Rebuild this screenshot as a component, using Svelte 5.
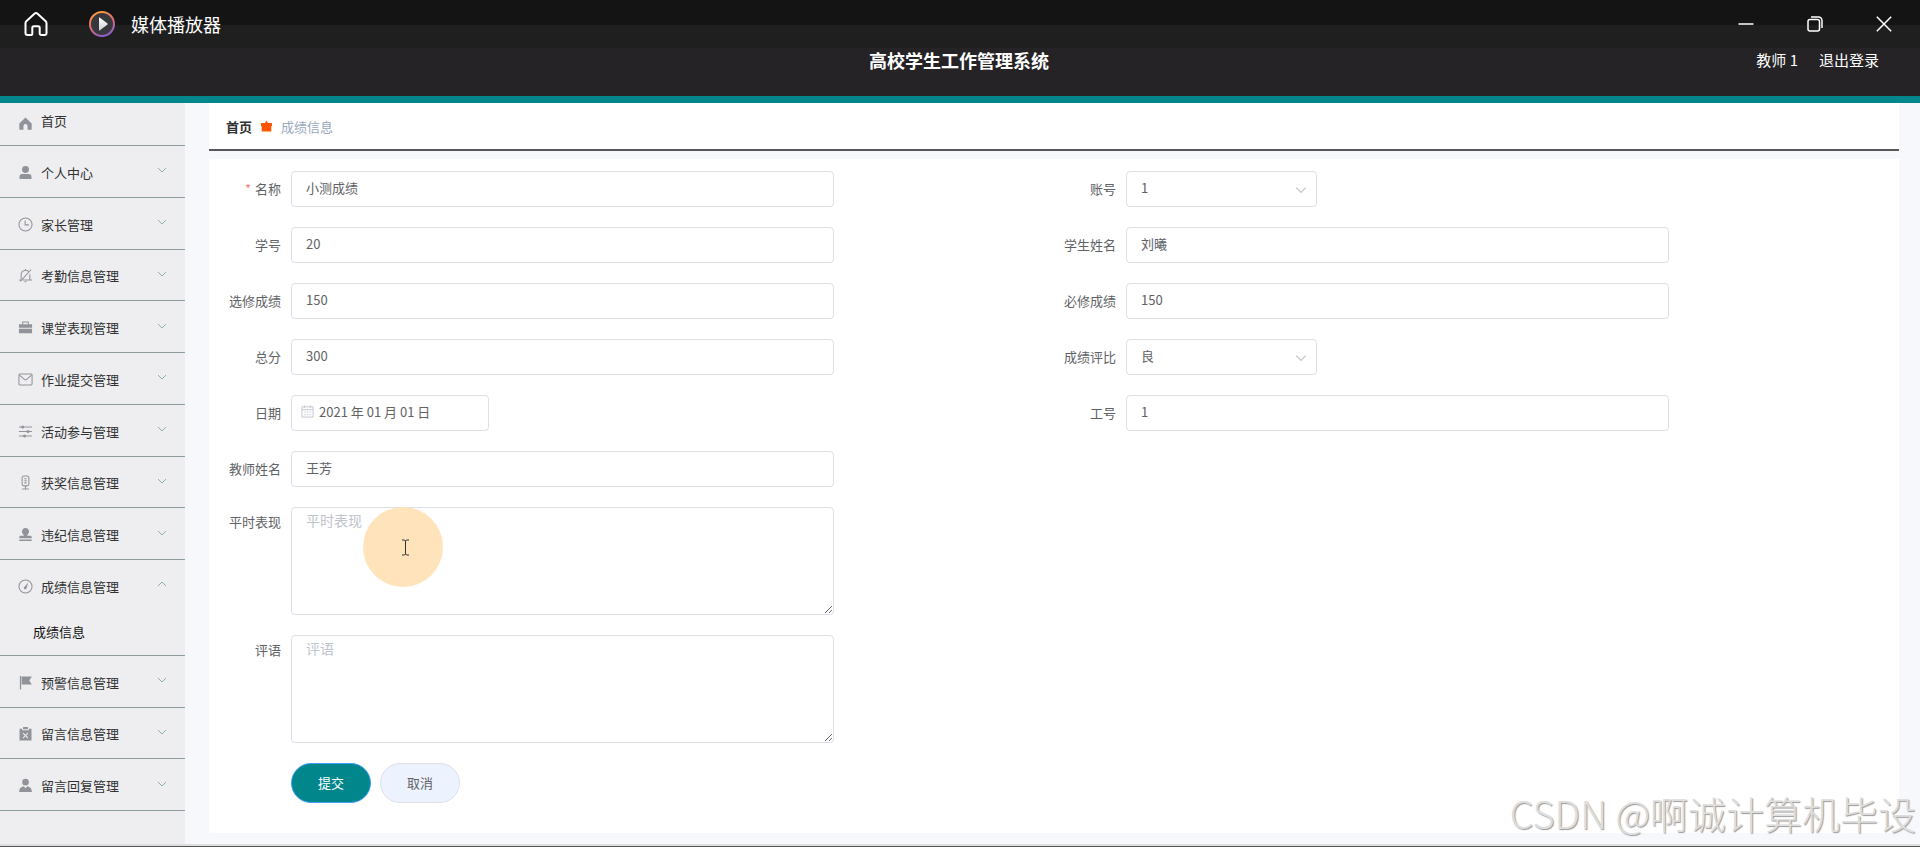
<script>
  const menu = [
    { text: '个人中心', icon: 'user' },
    { text: '家长管理', icon: 'clock' },
    { text: '考勤信息管理', icon: 'mute' },
    { text: '课堂表现管理', icon: 'case' },
    { text: '作业提交管理', icon: 'mail' },
    { text: '活动参与管理', icon: 'sliders' },
    { text: '获奖信息管理', icon: 'mic' },
    { text: '违纪信息管理', icon: 'stamp' },
    { text: '成绩信息管理', icon: 'compass', children: ['成绩信息'] },
    { text: '预警信息管理', icon: 'flag' },
    { text: '留言信息管理', icon: 'clipboard' },
    { text: '留言回复管理', icon: 'person' }
  ];

  const fields = [
    { id: 'name', label: '名称', value: '小测成绩', required: true },
    { id: 'account', label: '账号', value: '1', type: 'select' },
    { id: 'sno', label: '学号', value: '20' },
    { id: 'student', label: '学生姓名', value: '刘曦' },
    { id: 'elective', label: '选修成绩', value: '150' },
    { id: 'compulsory', label: '必修成绩', value: '150' },
    { id: 'total', label: '总分', value: '300' },
    { id: 'grade', label: '成绩评比', value: '良', type: 'select' },
    { id: 'date', label: '日期', value: '2021 年 01 月 01 日', type: 'date' },
    { id: 'jobno', label: '工号', value: '1' },
    { id: 'teacher', label: '教师姓名', value: '王芳', left: true },
    { id: 'usual', label: '平时表现', type: 'textarea', left: true, pointer: true },
    { id: 'comment', label: '评语', type: 'textarea', left: true }
  ];
</script>

{#snippet icon(name)}
  <svg class="icon" viewBox="0 0 16 16" aria-hidden="true">
    {#if name === 'home'}
      <path class="solid" d="M8 1.6 14.6 8v6.6h-4.4v-3.8a2.2 2.2 0 0 0-4.4 0v3.8H1.4V8z" />
    {:else if name === 'user'}
      <circle class="solid" cx="8" cy="4.8" r="3.7" />
      <path class="solid" d="M1.6 14.8v-2.2a3 3 0 0 1 3-3h6.8a3 3 0 0 1 3 3v2.2z" />
    {:else if name === 'clock'}
      <circle cx="8" cy="8" r="7" />
      <path d="M7.6 3.6v4.8h4" />
    {:else if name === 'mute'}
      <path d="M3.4 11.8V7a4.6 4.6 0 0 1 8.6-2.2M12.6 6.6v5.6M1.2 12.8h2.2M5.2 12.8h9.8M14 1.6 2.6 14.2M7 14.6h2M8 2.4V1" />
    {:else if name === 'case'}
      <path class="solid" d="M1 4.6h14v3.6H1zM1 9.2h14v5H1z" />
      <path d="M5 4.6V2.2h6v2.4" />
    {:else if name === 'mail'}
      <rect x="1" y="2.2" width="14" height="11.6" rx="1" />
      <path d="m1.6 3.4 5.2 4.4a1.8 1.8 0 0 0 2.4 0l5.2-4.4" />
    {:else if name === 'sliders'}
      <path d="M1 3.2h14M1 8h14M1 12.8h14" />
      <circle class="solid" cx="5" cy="3.2" r="1.6" />
      <circle class="solid" cx="10.6" cy="8" r="1.6" />
      <circle class="solid" cx="7" cy="12.8" r="1.6" />
    {:else if name === 'mic'}
      <rect x="4.4" y="1" width="7.2" height="10.6" rx="2" />
      <path d="M8 11.6V15M4.4 15h7.2M6.8 4h2.4M6.8 6.2h2.4M6.8 8.4h2.4" />
    {:else if name === 'stamp'}
      <path class="solid" d="M8 1a3.8 3.8 0 0 1 3.6 5C11 7.4 9.800 7.800 9.800 9.400h3.400a1.400 1.400 0 0 1 1.400 1.400V12H1.400v-1.200a1.400 1.400 0 0 1 1.400-1.400h3.400C6.200 7.800 5 7.400 4.400 6A3.800 3.800 0 0 1 8 1zM1.400 13.200h13.200v1.600H1.400z" />
    {:else if name === 'compass'}
      <circle cx="8" cy="8" r="7" />
      <path class="solid" d="M11 3.8 9.2 9.400a1.500 1.500 0 1 1-2.200-1.200z" />
    {:else if name === 'flag'}
      <path class="solid" d="M2 1h1.400v14.400H2zM4 1.600h10.800L12 5.800l2.800 4.200H4z" />
    {:else if name === 'clipboard'}
      <path class="solid" fill-rule="evenodd" d="M1.600 3h2.800v1.600h7.200V3h2.800v12.400H1.600zM5.400 1h5.200v2.400H5.400zM5.800 7.200 5 8l2.200 2.200L5 12.400l.8.8L8 11l2.200 2.200.8-.8-2.200-2.200L11 8l-.8-.8L8 9.400z" />
    {:else if name === 'person'}
      <circle class="solid" cx="8" cy="4.400" r="3.500" />
      <path class="solid" d="M1.200 14.800c0-3.400 1.800-5.400 4.800-6l2 2.200 2-2.200c3 .6 4.800 2.600 4.800 6z" />
    {/if}
  </svg>
{/snippet}

{#snippet chevron(up)}
  <svg class="chevron" class:up viewBox="0 0 10 10" aria-hidden="true"><path d="m1 3 4 4 4-4" /></svg>
{/snippet}

<div class="app">
  <div class="titlebar">
    <button class="home" aria-label="主页">
      <svg width="24" height="24" viewBox="0 0 24 24" aria-hidden="true">
        <path d="M10.700 1.600 2.300 9.200a2.400 2.400 0 0 0-.8 1.800v10a2 2 0 0 0 2 2h3.200a1.600 1.600 0 0 0 1.600-1.600v-5.600a1.600 1.600 0 0 1 1.600-1.600h4.200a1.600 1.600 0 0 1 1.600 1.600v5.600a1.600 1.600 0 0 0 1.600 1.600h3.200a2 2 0 0 0 2-2V11a2.400 2.400 0 0 0-.8-1.800l-8.400-7.600a2 2 0 0 0-2.600 0z" />
      </svg>
    </button>
    <svg class="player" viewBox="0 0 26 26" aria-hidden="true">
      <defs>
        <linearGradient id="ring" x1="0.300" y1="0" x2="0.700" y2="1">
          <stop offset="0" stop-color="#ff9a3c" />
          <stop offset="0.500" stop-color="#d8697c" />
          <stop offset="1" stop-color="#8a5fd0" />
        </linearGradient>
        <linearGradient id="tri" x1="0" y1="0" x2="0" y2="1">
          <stop offset="0" stop-color="#ffffff" />
          <stop offset="1" stop-color="#d0d0d0" />
        </linearGradient>
      </defs>
      <circle cx="13" cy="13" r="12" fill="#37383b" stroke="url(#ring)" stroke-width="2" />
      <path d="M10 7.200v11.600a.6.6 0 0 0 1 .5l7.500-5.700a.8.8 0 0 0 0-1.200L11 6.700a.6.6 0 0 0-1 .5z" fill="url(#tri)" />
    </svg>
    <span class="app-name">媒体播放器</span>
    <div class="window-buttons">
      <button aria-label="最小化"><svg viewBox="0 0 16 16"><path d="M.5 8h15" /></svg></button>
      <button aria-label="还原">
        <svg viewBox="0 0 16 16"><rect x="1" y="3.500" width="11.500" height="11.500" rx="2" /><path d="M4 1h7.500A3.500 3.500 0 0 1 15 4.500V12" /></svg>
      </button>
      <button aria-label="关闭"><svg viewBox="0 0 16 16"><path d="m.8.8 14.400 14.400M15.200.8.8 15.200" /></svg></button>
    </div>
  </div>

  <header>
    <h1>高校学生工作管理系统</h1>
    <div class="account">
      <span>教师 1</span>
      <a href="#logout">退出登录</a>
    </div>
  </header>

  <div class="body">
    <nav>
      <a class="row first" href="#home">{@render icon('home')}<span>首页</span></a>
      {#each menu as item}
        <button class="row" class:open={item.children}>
          {@render icon(item.icon)}<span>{item.text}</span>{@render chevron(!!item.children)}
        </button>
        {#each item.children ?? [] as child}
          <a class="sub" href="#scores">{child}</a>
        {/each}
      {/each}
    </nav>

    <main>
      <div class="breadcrumb">
        <a href="#home">首页</a>
        <svg viewBox="0 0 12 12" aria-hidden="true"><path d="M6 0 7.600 2.800H12v3.400h-.8V12H.8V6.200H0V2.800h4.400z" /></svg>
        <span>成绩信息</span>
      </div>

      <form onsubmit={(e) => e.preventDefault()}>
        {#each fields as f}
          <div class="field" class:left={f.left} class:tall={f.type === 'textarea'}>
            <label for={f.id}>{#if f.required}<i>*</i>{/if}{f.label}</label>
            {#if f.type === 'select'}
              <div class="control select">
                <select id={f.id}><option>{f.value}</option></select>
                {@render chevron(false)}
              </div>
            {:else if f.type === 'date'}
              <div class="control date">
                <svg class="calendar" viewBox="0 0 14 14" aria-hidden="true">
                  <path d="M1 2h12v11H1zM1 5h12M4 .5v2.500M10 .5v2.500M3.500 7.500h1.500M6.300 7.500h1.500M9 7.500h1.500M3.500 10.500h1.500M6.300 10.500h1.500M9 10.500h1.500" />
                </svg>
                <input id={f.id} value={f.value} />
              </div>
            {:else if f.type === 'textarea'}
              <div class="control">
                <textarea id={f.id} placeholder={f.label}></textarea>
                {#if f.pointer}
                  <div class="spot">
                    <svg viewBox="0 0 9 17" aria-hidden="true"><path d="M1 1h2.500l1 1 1-1H8M1 16h2.500l1-1 1 1H8M4.500 2v13" /></svg>
                  </div>
                {/if}
              </div>
            {:else}
              <div class="control"><input id={f.id} value={f.value} /></div>
            {/if}
          </div>
        {/each}
        <div class="actions">
          <button class="submit" type="submit">提交</button>
          <button type="button">取消</button>
        </div>
      </form>
    </main>
  </div>
  <div class="watermark">CSDN @啊诚计算机毕设</div>
</div>

<style>
  :global(body) {
    margin: 0;
  }
  .app, button, input, select, textarea {
    font-family: "Noto Sans CJK SC", "Noto Sans", sans-serif;
  }
  .app {
    position: relative;
    box-sizing: border-box;
    min-height: 100vh;
    display: flex;
    flex-direction: column;
    font-size: 13px;
    color: #606266;
    background: #f6f8fc;
    border-bottom: 1px solid #555;
  }
  .app * {
    box-sizing: border-box;
  }
  button {
    margin: 0;
    padding: 0;
    border: 0;
    background: none;
    color: inherit;
    font-size: 13px;
    cursor: pointer;
  }
  a {
    color: inherit;
    text-decoration: none;
  }
  svg {
    display: block;
    fill: none;
    stroke: currentColor;
  }

  .titlebar {
    display: flex;
    align-items: center;
    height: 48px;
    padding: 0 2px 0 24px;
    color: #fff;
    background: linear-gradient(#141414 25px, #1f1f1f 25px);
  }
  .home svg {
    stroke-width: 2;
  }
  .player {
    width: 26px;
    height: 26px;
    margin: 0 16px 0 41px;
    stroke: none;
  }
  .app-name {
    font-size: 18px;
  }
  .window-buttons {
    display: flex;
    margin-left: auto;
  }
  .window-buttons button {
    display: grid;
    place-items: center;
    width: 69px;
    height: 48px;
  }
  .window-buttons svg {
    width: 16px;
    height: 16px;
    stroke-width: 1.500;
  }

  header {
    display: grid;
    grid-template-columns: 1fr auto 1fr;
    align-items: center;
    padding: 0 41px 24px 39px;
    color: #fff;
    background: #252326;
    border-bottom: 7px solid #00868b;
    line-height: 24px;
  }
  h1 {
    grid-column: 2;
    margin: 0;
    font-size: 18px;
    font-weight: 700;
  }
  .account {
    display: flex;
    justify-content: flex-end;
    gap: 21px;
    font-size: 15px;
    line-height: 22px;
  }

  .body {
    flex: 1;
    display: flex;
    border-bottom: 2px solid #dedede;
  }
  nav {
    flex: none;
    display: flex;
    flex-direction: column;
    width: 185px;
    padding-bottom: 33px;
    background: #eeeef0;
    color: #303133;
  }
  .row {
    flex: 1;
    display: flex;
    align-items: center;
    gap: 8px;
    min-height: 40px;
    padding: 2px 18px 0;
    border-bottom: 1px solid #8d9c9c;
    text-align: left;
  }
  .row.first {
    flex: none;
    height: 43px;
    padding: 0 18px 2px;
  }
  .row.first span {
    padding-bottom: 6px;
  }
  .row.open {
    border-bottom: 0;
  }
  .row .chevron {
    margin: 0 0 4px auto;
    color: #8fb0ae;
  }
  .icon {
    flex: none;
    width: 15px;
    height: 15px;
    color: #909399;
    stroke-width: 1.100;
  }
  .icon .solid {
    fill: currentColor;
    stroke: none;
  }
  .chevron {
    width: 10px;
    height: 10px;
    stroke-width: 1;
  }
  .chevron.up {
    transform: rotate(180deg);
  }
  .sub {
    height: 45px;
    padding-left: 33px;
    border-bottom: 1px solid #8d9c9c;
    color: #111;
    line-height: 42px;
  }

  main {
    flex: 1;
    display: flex;
    flex-direction: column;
    gap: 8px;
    min-width: 0;
    padding: 0 21px 11px 24px;
  }
  .breadcrumb {
    display: flex;
    align-items: center;
    gap: 9px;
    height: 48px;
    padding-left: 17px;
    background: #fff;
    border-bottom: 2px solid #59575a;
    color: #97a8be;
  }
  .breadcrumb a {
    color: #303133;
    font-weight: 700;
  }
  .breadcrumb svg {
    width: 11px;
    height: 12px;
    fill: #ff5500;
    stroke: none;
  }

  form {
    flex: 1;
    display: grid;
    grid-template-columns: 1fr 1fr;
    align-content: start;
    row-gap: 20px;
    padding: 12px 10px 30px;
    background: #fff;
  }
  .field {
    display: flex;
    line-height: 35px;
  }
  .left, .actions {
    grid-column: 1;
  }
  .tall {
    line-height: 30px;
  }
  label {
    flex: none;
    width: 72px;
    padding-right: 10px;
    text-align: right;
    white-space: nowrap;
  }
  label i {
    margin-right: 4px;
    color: #f08080;
    font-style: normal;
  }
  .control {
    position: relative;
    width: 65%;
  }
  .control.select {
    width: 191px;
  }
  .control.date {
    width: 198px;
  }
  input, select, textarea {
    display: block;
    width: 100%;
    height: 36px;
    margin: 0;
    padding: 0 14px 3px;
    border: 1px solid #dcdfe6;
    border-radius: 4px;
    background: #fff;
    color: #606266;
    font-size: 13px;
    outline: 0;
    appearance: none;
  }
  .date input {
    padding-left: 27px;
  }
  textarea {
    height: 108px;
    padding: 2px 14px;
    line-height: 20px;
    font-size: 14px;
    resize: vertical;
  }
  textarea::placeholder {
    color: #c0c4cc;
  }
  .select .chevron {
    position: absolute;
    top: 13px;
    right: 10px;
    width: 12px;
    height: 12px;
    color: #c0c4cc;
    pointer-events: none;
  }
  .calendar {
    position: absolute;
    top: 10px;
    left: 10px;
    width: 13px;
    height: 13px;
    color: #c0c4cc;
  }
  .spot {
    position: absolute;
    top: 0;
    left: 72px;
    display: grid;
    place-items: center;
    width: 80px;
    height: 80px;
    padding-left: 4px;
    border-radius: 50%;
    background: #fee3bb;
    color: #333;
    pointer-events: none;
  }
  .spot svg {
    width: 9px;
    height: 17px;
  }
  .actions {
    display: flex;
    gap: 9px;
    padding-left: 72px;
  }
  .actions button {
    width: 80px;
    height: 40px;
    padding-bottom: 2px;
    border: 1px solid #dcdfe6;
    border-radius: 20px;
    background: #ecf3ff;
  }
  .actions .submit {
    border-color: #409eff;
    background: #00868b;
    color: #fff;
  }

  .watermark {
    position: absolute;
    right: 4px;
    bottom: 8px;
    color: #dedede;
    font-size: 38px;
    font-weight: 300;
    line-height: 50px;
    text-shadow: 1px 1px 1px #999;
    pointer-events: none;
  }
</style>
